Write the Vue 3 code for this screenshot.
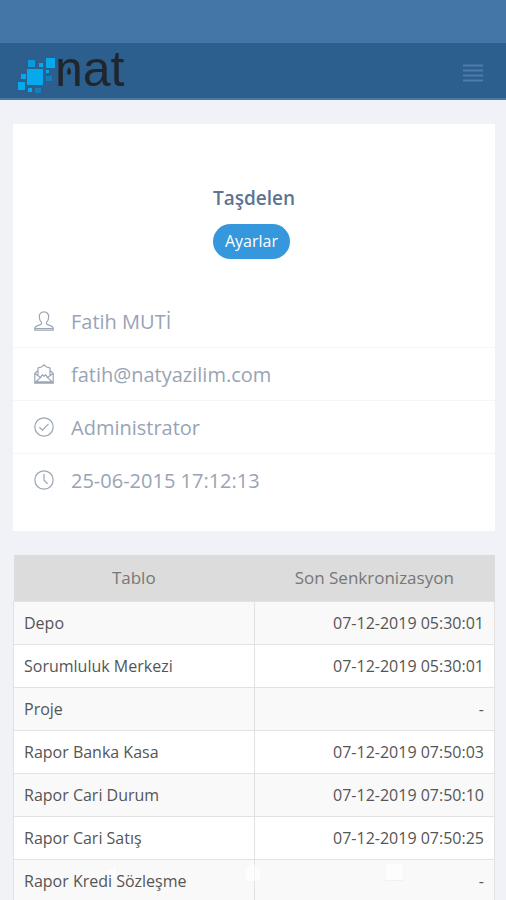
<script setup>
const tables = [
  { name: 'Depo', synced: '07-12-2019 05:30:01' },
  { name: 'Sorumluluk Merkezi', synced: '07-12-2019 05:30:01' },
  { name: 'Proje', synced: '-' },
  { name: 'Rapor Banka Kasa', synced: '07-12-2019 07:50:03' },
  { name: 'Rapor Cari Durum', synced: '07-12-2019 07:50:10' },
  { name: 'Rapor Cari Satış', synced: '07-12-2019 07:50:25' },
  { name: 'Rapor Kredi Sözleşme', synced: '-' },
]
</script>

<template>
  <div class="page">
    <div class="status-bar"></div>
    <header class="navbar">
      <a class="logo" href="#">
        <svg class="logo-mark" viewBox="0 0 40 38" aria-hidden="true">
          <g fill="#06a9ec">
            <rect x="10" y="13" width="16" height="16" />
            <rect x="29" y="2" width="9" height="10" />
            <rect x="1" y="26" width="7" height="8" />
            <rect x="4" y="18" width="5" height="5" />
            <rect x="22" y="7" width="4" height="4" />
            <rect x="29" y="14" width="3" height="3" />
            <rect x="11" y="32" width="4" height="4" />
          </g>
          <rect x="11" y="4" width="7" height="7" fill="#0b9bdc" />
          <rect x="29" y="20" width="6" height="5" fill="#147fb9" />
          <rect x="18" y="32" width="6" height="5" fill="#147fb9" />
        </svg>
        <span class="logo-text">nat</span>
        <svg class="logo-drop" viewBox="0 0 4 8" aria-hidden="true"><path d="M2 0C3 2 4 3 4 5C4 7 3 7 2 8C1 7 0 7 0 5C0 3 1 2 2 0Z" fill="#20262e" /></svg>
      </a>
      <button class="menu" type="button" aria-label="Menü">
        <svg viewBox="0 0 22 20"><path d="M1 2.5H21M1 7.5H21M1 12.5H21M1 17.5H21" stroke="#4c7dab" stroke-width="2" /></svg>
      </button>
    </header>

    <main class="content">
      <section class="card">
        <div class="profile">
          <h1>Taşdelen</h1>
          <button class="settings" type="button">Ayarlar</button>
        </div>
        <ul class="info">
          <li>
            <svg class="icon" viewBox="0 0 20 20"><path d="M10 .8C7 .8 5.3 3 5.3 5.8C5.3 8.2 6 10 7.4 11.3C8.1 12.6 7.2 13.4 5.6 13.9C2.5 14.9 .8 15.6 .8 17.4V19.2H19.2V17.4C19.2 15.6 17.5 14.9 14.4 13.9C12.8 13.4 11.9 12.6 12.6 11.3C14 10 14.7 8.2 14.7 5.8C14.7 3 13 .8 10 .8ZM1 17.5H19" /></svg>
            <span>Fatih MUTİ</span>
          </li>
          <li>
            <svg class="icon" viewBox="0 0 20 20"><path d="M4 11V4L7.5 3L10 .8L12.5 3L16 4V11M4 6.5L.8 9.5V19.2H19.2V9.5L16 6.5M.8 9.5L6.5 13.5M19.2 9.5L13.5 13.5M1 18.5L6.8 13.4L8.3 10.8L10 12.3L11.7 10.8L13.2 13.4L19 18.5M1 17.8H19" /></svg>
            <span>fatih@natyazilim.com</span>
          </li>
          <li>
            <svg class="icon" viewBox="0 0 20 20"><circle cx="10" cy="10" r="9.2" /><path d="M5.4 10.3L8.4 13.2L14.6 6.8" /></svg>
            <span>Administrator</span>
          </li>
          <li>
            <svg class="icon" viewBox="0 0 20 20"><circle cx="10" cy="10" r="9.2" /><path d="M10 4V10.3L13.6 13.8" /></svg>
            <span>25-06-2015 17:12:13</span>
          </li>
        </ul>
      </section>

      <table class="sync">
        <thead>
          <tr><th scope="col">Tablo</th><th scope="col">Son Senkronizasyon</th></tr>
        </thead>
        <tbody>
          <tr v-for="row in tables" :key="row.name">
            <td>{{ row.name }}</td>
            <td class="date">{{ row.synced }}</td>
          </tr>
        </tbody>
      </table>
    </main>

    <div class="system-nav" aria-hidden="true">
      <svg viewBox="0 0 20 20"><path d="M14 4V16L4 10Z" /></svg>
      <svg viewBox="0 0 20 20"><path d="M10 1L17 8V19H3V8Z" /></svg>
      <svg viewBox="0 0 20 20"><rect x="2" y="2" width="16" height="16" /><path class="shade" d="M1 18.5H19" /></svg>
    </div>
  </div>
</template>

<style>
body {
  background: #f0f2f8;
}
</style>

<style scoped>
.page {
  height: 100vh;
  overflow: hidden;
  font-family: "Open Sans", "Noto Sans", sans-serif;
  background: #f0f2f8;
}
.status-bar {
  height: 43px;
  background: #4477a8;
}
.navbar {
  display: flex;
  align-items: center;
  justify-content: space-between;
  height: 57px;
  padding: 0 22px 0 17px;
  box-sizing: border-box;
  background: #2c5f8d;
  border-bottom: 2px solid #4878a5;
}
.logo {
  position: relative;
  display: flex;
  align-items: center;
  text-decoration: none;
}
.logo-mark {
  width: 40px;
  height: 38px;
  margin-top: 8px;
}
.logo-text {
  margin-left: -2px;
  padding-bottom: 4px;
  font: 50px/52px "Liberation Sans", Arial, sans-serif;
  color: #20262e;
}
.logo-drop {
  position: absolute;
  left: 50px;
  top: 24px;
  width: 4px;
  height: 8px;
}
.menu {
  display: flex;
  padding: 4px 0 0;
  border: 0;
  background: none;
}
.menu svg {
  width: 22px;
  height: 20px;
}
.content {
  padding: 24px 11px 24px 13px;
}
.card {
  padding: 60px 0 24px;
  background: #fff;
}
.profile {
  display: flex;
  flex-direction: column;
  align-items: center;
  gap: 12px;
}
h1 {
  margin: 0;
  font-size: 19px;
  line-height: 28px;
  font-weight: 600;
  color: #5a7593;
}
.settings {
  height: 35px;
  margin: 0 5px 0 0;
  padding: 0 12px 2px;
  border: 0;
  border-radius: 18px;
  background: #3598dc;
  color: #fff;
  font-family: inherit;
  font-size: 16px;
  line-height: 24px;
}
.info {
  margin: 36px 0 0;
  padding: 0;
  list-style: none;
}
.info li {
  display: flex;
  align-items: center;
  gap: 17px;
  height: 52px;
  padding-left: 21px;
  border-bottom: 1px solid #f5f6fa;
  color: #98a4b5;
  font-size: 20px;
}
.info li:last-child {
  border-bottom-color: transparent;
}
.icon {
  width: 20px;
  height: 20px;
  fill: none;
  stroke: #9ba6b5;
  stroke-width: 1.2;
}
.sync {
  width: 100%;
  margin-top: 24px;
  border-collapse: collapse;
  table-layout: fixed;
  font-size: 16px;
  line-height: 24px;
  color: #555;
}
.sync th {
  height: 46px;
  padding: 0 10px;
  box-sizing: border-box;
  background: #dcdcdc;
  color: #777;
  font-size: 17px;
  font-weight: 400;
}
.sync td {
  height: 43px;
  padding: 0 10px;
  box-sizing: border-box;
  border: 1px solid #e2e2e2;
  background: #fff;
}
.sync tbody tr:nth-child(odd) td {
  background: #f9f9f9;
}
.sync .date {
  text-align: right;
}
.system-nav {
  position: fixed;
  right: 0;
  bottom: 18px;
  left: 0;
  display: flex;
  justify-content: space-around;
  padding: 0 42px;
}
.system-nav svg {
  width: 20px;
  height: 20px;
  fill: #fff;
  opacity: 0.6;
}
.shade {
  stroke: #ececec;
}
</style>
